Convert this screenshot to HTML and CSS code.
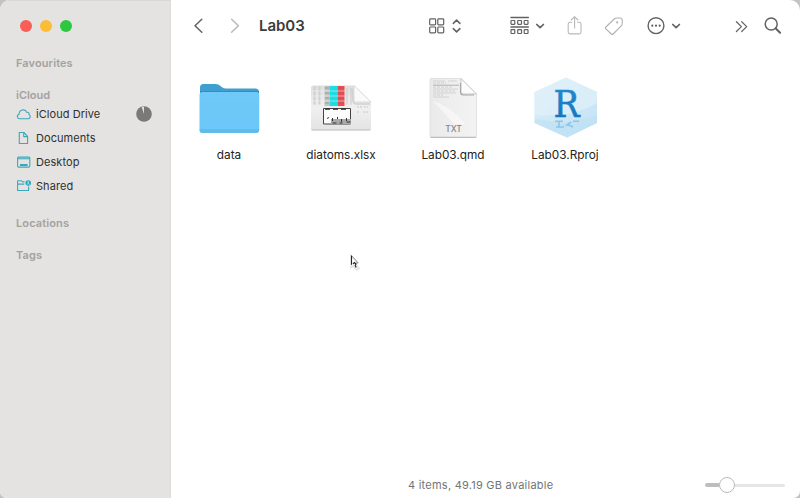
FILE: index.html
```html
<!DOCTYPE html>
<html lang="en">
<head>
<meta charset="utf-8">
<title>Lab03</title>
<link rel="stylesheet" href="styles.css">
</head>
<body>
<div class="window">
  <aside class="sidebar">
    <div class="lights"><i class="light close"></i><i class="light minimise"></i><i class="light zoom"></i></div>
    <h2 class="heading favourites">Favourites</h2>
    <h2 class="heading cloud">iCloud</h2>
    <nav class="places">
      <div class="place">
        <svg class="place-icon" width="16" height="16" viewBox="0 0 16 16"><path d="M4 12.8C.9 12.8.4 9 3.1 8.2 3.1 3.5 9.4 2.3 10.7 6.3c2-.2 2.5 1.1 2.5 2.3 2 1.5.8 4.2-1.2 4.2z"/></svg>
        <span class="drive">iCloud Drive</span>
        <svg class="progress" width="16" height="16" viewBox="0 0 16 16"><circle cx="8" cy="8" r="7.8" fill="#797978"/><path d="M8 8 5.7 1.1Q6.7.8 8 .8z" fill="#e4e3e1"/></svg>
      </div>
      <div class="place">
        <svg class="place-icon" width="16" height="16" viewBox="0 0 16 16"><path d="M3.3 2.5h4.6l3.7 3.8v7.2H3.3zM7.7 2.7v3.9h3.8"/></svg>
        <span>Documents</span>
      </div>
      <div class="place">
        <svg class="place-icon" width="16" height="16" viewBox="0 0 16 16"><rect x="1.6" y="3.1" width="12.2" height="10" rx="1"/><path d="M2 4.8h11.5"/><path d="M4 10.9h7.6" stroke-width="2"/></svg>
        <span>Desktop</span>
      </div>
      <div class="place">
        <svg class="place-icon" width="16" height="16" viewBox="0 0 16 16"><path d="M8.5 3.9H6.7L5.5 2.8H1.6v9.7h11V8.6M1.7 6.1h6.5"/><circle cx="12.2" cy="5" r="2.8" fill="#20a8c0" stroke="none"/><circle cx="12.2" cy="4.1" r=".8" fill="#e4e3e1" stroke="none"/><path d="M10.8 6.3q1.4-1.5 2.8 0" stroke="#e4e3e1" stroke-width=".8"/></svg>
        <span>Shared</span>
      </div>
    </nav>
    <h2 class="heading locations">Locations</h2>
    <h2 class="heading tags">Tags</h2>
  </aside>
  <main class="content">
    <header class="toolbar">
      <svg class="back" width="12" height="18" viewBox="0 0 12 18"><path d="M8.8 2.2 2 8.7l6.8 6.5"/></svg>
      <svg class="forward dim" width="12" height="18" viewBox="0 0 12 18"><path d="m2.6 2.2 6.8 6.5-6.8 6.5"/></svg>
      <h1 class="title">Lab03</h1>
      <svg class="grid-view" width="16" height="18" viewBox="0 0 16 18"><g stroke-width="1.2"><rect x=".7" y="1.9" width="5.9" height="5.9" rx=".8"/><rect x="8.8" y="1.9" width="5.9" height="5.9" rx=".8"/><rect x=".7" y="10" width="5.9" height="5.9" rx=".8"/><rect x="8.8" y="10" width="5.9" height="5.9" rx=".8"/></g></svg>
      <svg class="updown" width="10" height="18" viewBox="0 0 10 18"><path d="M1.3 6.4 4.6 3.1l3.3 3.3M1.3 11.6l3.3 3.3 3.3-3.3"/></svg>
      <svg class="group" width="20" height="20" viewBox="0 0 20 20"><path d="M1 1.4h17.3M1 10.9h17.3"/><g stroke-width="1.2"><rect x="1" y="4.5" width="3.8" height="3.8" rx=".5"/><rect x="7.7" y="4.5" width="3.8" height="3.8" rx=".5"/><rect x="14.2" y="4.5" width="3.8" height="3.8" rx=".5"/><rect x="1" y="13.7" width="3.8" height="3.8" rx=".5"/><rect x="7.7" y="13.7" width="3.8" height="3.8" rx=".5"/><rect x="14.2" y="13.7" width="3.8" height="3.8" rx=".5"/></g></svg>
      <svg class="group-arrow" width="10" height="10" viewBox="0 0 10 10"><path d="m1.8 3.5 3.3 3.2 3.3-3.2" stroke-width="1.7"/></svg>
      <svg class="share dim" width="16" height="20" viewBox="0 0 16 20"><path d="M4.8 6.3H3q-1.8 0-1.8 1.8v8q0 1.8 1.8 1.8h9.2q1.8 0 1.8-1.8v-8q0-1.8-1.8-1.8h-1.8M7.6 12V.8M4.3 4l3.3-3.3L10.9 4" stroke-width="1.1"/></svg>
      <svg class="tag" width="20" height="20" viewBox="0 0 20 20"><path d="m1.9 11 8.3-8q1-1 2.4-1h3.6q2 0 2 2v3.4q0 1.5-1 2.5l-8 8.1q-.9.9-1.9 0l-5.4-5.1q-1-1 0-1.9z" stroke-width="1.1"/><circle cx="13.2" cy="6.4" r=".4" fill="#b0b0b0"/></svg>
      <svg class="more" width="18" height="18" viewBox="0 0 18 18"><circle cx="9" cy="8.7" r="7.9" stroke-width="1.4"/><g fill="#626262" stroke="none"><circle cx="5.3" cy="8.7" r="1.1"/><circle cx="9" cy="8.7" r="1.1"/><circle cx="12.7" cy="8.7" r="1.1"/></g></svg>
      <svg class="more-arrow" width="10" height="10" viewBox="0 0 10 10"><path d="m1.8 3.5 3.3 3.2 3.3-3.2" stroke-width="1.7"/></svg>
      <svg class="overflow" width="14" height="14" viewBox="0 0 14 14"><path d="m1.4 2.7 5 4.9-5 4.9m5.3-9.8 5 4.9-5 4.9" stroke-width="1.2"/></svg>
      <svg class="search" width="18" height="18" viewBox="0 0 18 18"><circle cx="7.2" cy="7" r="6" stroke-width="1.5"/><path d="m11.8 11.5 4.3 4.3" stroke-width="2"/></svg>
    </header>
    <section class="files">
      <figure class="file">
        <svg width="64" height="64" viewBox="0 0 64 64">
          <defs><linearGradient id="folder" x2="0" y2="1"><stop stop-color="#70c9f7"/><stop offset="1" stop-color="#6ac7f8"/></linearGradient></defs>
          <path d="M3 11.5Q3 8 6.5 8h12q3 0 5 2l1.5 1.2q1.7 1.3 4 1.3h29q4 0 4 3.5V28H3z" fill="#3e9fd0"/>
          <path d="M3 15.3h59V28H3z" fill="#258bc2"/>
          <path d="M5.5 16h53.8q3 0 3 3v34.6q0 3.4-3.5 3.4H5.5Q2.5 57 2.5 54V19q0-3 3-3z" fill="url(#folder)"/>
          <path d="M2.7 53.2h59.4v.5q0 3.3-3.3 3.3H6q-3.3 0-3.3-3.3z" fill="#5fbbe8"/>
        </svg>
        <figcaption>data</figcaption>
      </figure>
      <figure class="file">
        <svg width="64" height="64" viewBox="0 0 64 64">
          <defs><linearGradient id="sheet" x2="0" y2="1"><stop stop-color="#dededd"/><stop offset=".5" stop-color="#f0f0f0"/><stop offset="1" stop-color="#e3e3e3"/></linearGradient></defs>
          <path d="M4 9.5h41L62 26v26.5q0 2-2 2H4q-2 0-2-2v-41q0-2 2-2z" fill="url(#sheet)"/>
          <path d="M2.5 53.9h59" stroke="#cacaca" stroke-width="1.2"/>
          <path d="M5.5 10.5v18m5-18v18" stroke="#d0d0d0" stroke-width="2"/>
          <path d="M15.5 10h5v20h-5z" fill="#bfc4c4"/><path d="M20.5 10h8v20h-8z" fill="#1bdde3"/><path d="M28.5 10h7v20h-7z" fill="#ee4c52"/>
          <path d="M3 15h33M3 20h33M3 25h33" stroke="#f8f8f8" stroke-width="1" opacity=".5"/>
          <path d="M16 12h4m9 0h6m-19 5h4m9 0h6m-19 5h4m9 0h6m-19 5h4m9 0h6" stroke="#6c7172" stroke-width="1" opacity=".5"/>
          <path d="M38 12v17m4-17v17" stroke="#cbcbcb"/>
          <path d="M45 9.5 62 26H47q-2 0-2-2z" fill="#fafafa" stroke="#ccc" stroke-width=".7"/>
          <path d="m43 12 1 13q.3 3 4 3h13" fill="none" stroke="#d1d1d1" stroke-width="1.5"/>
          <path d="M48 31h5m2 0h4M48 36h2m4 0h5" stroke="#d4d4d4" stroke-width="1.3" stroke-dasharray="2 1"/>
          <path d="M14.5 48V32.5h27V48z" fill="#fcfcfc" stroke="#444" stroke-width="1"/>
          <path d="M16 33.2h5m3 0h5m3 0h5" stroke="#111" stroke-width="1"/>
          <path d="M22 43h20v5H22z" fill="#a8a8a8"/><path d="m19.5 41-1 2m5-1v3m5-4v2m4 0v3m5-4v3m-14 2h4m3 0h3m4-1h4" stroke="#343434"/>
        </svg>
        <figcaption>diatoms.xlsx</figcaption>
      </figure>
      <figure class="file">
        <svg width="64" height="64" viewBox="0 0 64 64">
          <defs><linearGradient id="paper"><stop stop-color="#eaeaea"/><stop offset="1" stop-color="#f3f3f3"/></linearGradient></defs>
          <path d="M9.5 2.5H40L55.5 18v42q0 1.5-1.5 1.5H10.5Q9 61.5 9 60V4q0-1.5.5-1.5z" fill="url(#paper)" stroke="#d8d8d8" stroke-width=".7"/>
          <path d="M9.5 61.3h45.7" stroke="#bdbdbd" stroke-width="1.2"/>
          <path d="M12 5h12m3 0h9M12 13h25M12 17h23M12 21h16" stroke="#cbcbcb" stroke-width=".8"/><path d="M12 9.2h26" stroke="#b3b3b3"/>
          <path d="M12 7h13m-13 4h19m-19 4h22m-22 4h10" stroke="#c9c9c9" stroke-width=".8" stroke-dasharray="3 1"/>
          <path d="M12 25q18 5 32 23H33z" fill="#f9f9f9" opacity=".7"/>
          <path d="M40 2.5 55.5 18H42q-2 0-2-2z" fill="#fbfbfb" stroke="#c7c7c7"/>
          <path d="M39.5 7v9q0 3 3 3H53" fill="none" stroke="#a8a8a8" stroke-width="1.1"/>
          <text class="type-name" x="32.5" y="56" text-anchor="middle">TXT</text>
        </svg>
        <figcaption>Lab03.qmd</figcaption>
      </figure>
      <figure class="file">
        <svg width="64" height="64" viewBox="0 0 64 64">
          <defs><linearGradient id="hex" x2="1" y2="1"><stop stop-color="#deeff8"/><stop offset=".5" stop-color="#cee8f7"/><stop offset="1" stop-color="#c2e3f5"/></linearGradient><linearGradient id="letter" x2="0" y2="1"><stop stop-color="#248dd0"/><stop offset="1" stop-color="#1471b9"/></linearGradient></defs>
          <path d="M33 1.5 64 16v31L34 61.5 1.5 47V16z" fill="url(#hex)"/>
          <path d="M33 1.5 64 16v11q-25 15-62.5 12V16z" fill="#e2f1f9" opacity=".65"/>
          <path d="M1.5 43 32 47l32-7v7L34 61.5 1.5 47z" fill="#b9dff4" opacity=".5"/>
          <path d="M22 45.2h8m10 0h6M26 45v6m-3 0h8m7-5-4 3q3 0 6 2" fill="none" stroke="#8dc5e7" stroke-width="1.6"/>
          <text class="r-mark" x="20.5" y="40.5" textLength="26" lengthAdjust="spacingAndGlyphs">R</text>
        </svg>
        <figcaption>Lab03.Rproj</figcaption>
      </figure>
    </section>
    <footer class="status">
      <span class="summary">4 items, 49.19 GB available</span>
      <div class="slider"><i class="filled"></i><i class="knob"></i><i class="track"></i></div>
    </footer>
  </main>
  <svg class="cursor" width="14" height="20" viewBox="0 0 14 20"><path d="M2 2.5 9 10l-2 1.5 3 4-2.5 1.5-3-4L2 14.5z" fill="#fff" stroke="#e2e2e2" stroke-width="1.5"/><path d="M2.5 2.5v9.2M4 11l1.4-1.4L7 11l-.8 1.5 1 2" fill="none" stroke="#222" stroke-width="1.1"/><path d="m3 3 6 6.8H7" fill="none" stroke="#888" stroke-width=".8"/></svg>
</div>
</body>
</html>
```
FILE: styles.css
```css
* { box-sizing: border-box; }
body { margin: 0; background: #c5c3c1; font-family: Inter, "Liberation Sans", sans-serif; }
.window { position: relative; display: flex; width: 800px; height: 498px; overflow: hidden; border-radius: 10px 10px 7px 7px; background: #fff; }
.sidebar { width: 171px; padding: 20px 0 0 16px; background: #e4e3e1; border-top: 1px solid #d9d8d6; border-right: 1px solid #dddcda; }
.lights { display: flex; gap: 8px; height: 12px; margin: -1px 0 0 4px; }
.light { width: 12px; height: 12px; border-radius: 50%; }
.close { background: #f75f58; }
.minimise { background: #fbbd35; }
.zoom { background: #2dc840; }
.heading { margin: 0; height: 16px; font-size: 11px; line-height: 16px; font-weight: 600; color: #a3a2a0; }
.favourites { margin-top: 23px; letter-spacing: .1px; }
.cloud { margin-top: 16px; }
.places { margin-top: -1px; }
.place { display: flex; align-items: center; height: 24px; font-size: 11px; font-weight: 400; letter-spacing: .06px; color: #303030; }
.place-icon { margin-right: 4px; fill: none; stroke: #38a9bd; stroke-width: 1.1; stroke-linejoin: round; }
.progress { margin-left: auto; margin-right: 18px; }
.locations { margin-top: 17px; letter-spacing: .12px; }
.tags { margin-top: 16px; letter-spacing: .1px; }
.content { flex: 1; display: flex; flex-direction: column; min-width: 0; }
.toolbar { display: flex; align-items: center; height: 51px; padding-left: 22px; }
.toolbar svg { flex: none; fill: none; stroke: #626262; stroke-width: 1.5; stroke-linecap: round; stroke-linejoin: round; }
.toolbar .dim { stroke: #b9b9b9; }
.toolbar .tag { stroke: #b0b0b0; margin-left: 21px; }
.forward { margin-left: 24px; }
.title { width: 60px; margin: 0 0 0 18px; font-size: 15px; font-weight: 600; line-height: 20px; letter-spacing: -.05px; color: #3c3c3c; }
.grid-view { margin-left: 110px; }
.updown { margin-left: 7px; }
.group { margin-left: 48px; }
.group-arrow { margin-left: 5px; }
.share { margin-left: 22px; }
.more { margin-left: 23px; }
.more-arrow { margin-left: 6px; }
.overflow { margin-left: 54px; }
.search { margin-left: 15px; }
.files { display: grid; grid-template-columns: repeat(4, 112px); padding: 25px 0 0 2px; }
.file { display: flex; flex-direction: column; align-items: center; margin: 0; }
.file svg { display: block; }
.file figcaption { margin-top: 7px; font-size: 11.8px; line-height: 16px; font-weight: 400; color: #222; white-space: nowrap; }
.type-name { font-size: 8.5px; font-weight: 500; fill: #858585; }
.r-mark { font-family: "DejaVu Serif", serif; font-size: 38px; fill: url(#letter); stroke: url(#letter); stroke-width: .6; }
.status { position: relative; display: flex; align-items: center; height: 26px; margin-top: auto; padding-left: 237px; }
.summary { width: 170px; font-size: 11px; font-weight: 400; letter-spacing: .24px; color: #747474; white-space: nowrap; }
.slider { display: flex; align-items: center; width: 80px; margin-left: 127px; }
.filled { width: 14px; height: 4px; border-radius: 2px 0 0 2px; background: #bdbdbd; }
.knob { width: 16px; height: 16px; border: 1px solid #bababa; border-radius: 50%; background: #fff; }
.track { flex: 1; height: 3px; border-radius: 0 2px 2px 0; background: #e6e6e6; }
.cursor { position: absolute; left: 349px; top: 253px; }
```
